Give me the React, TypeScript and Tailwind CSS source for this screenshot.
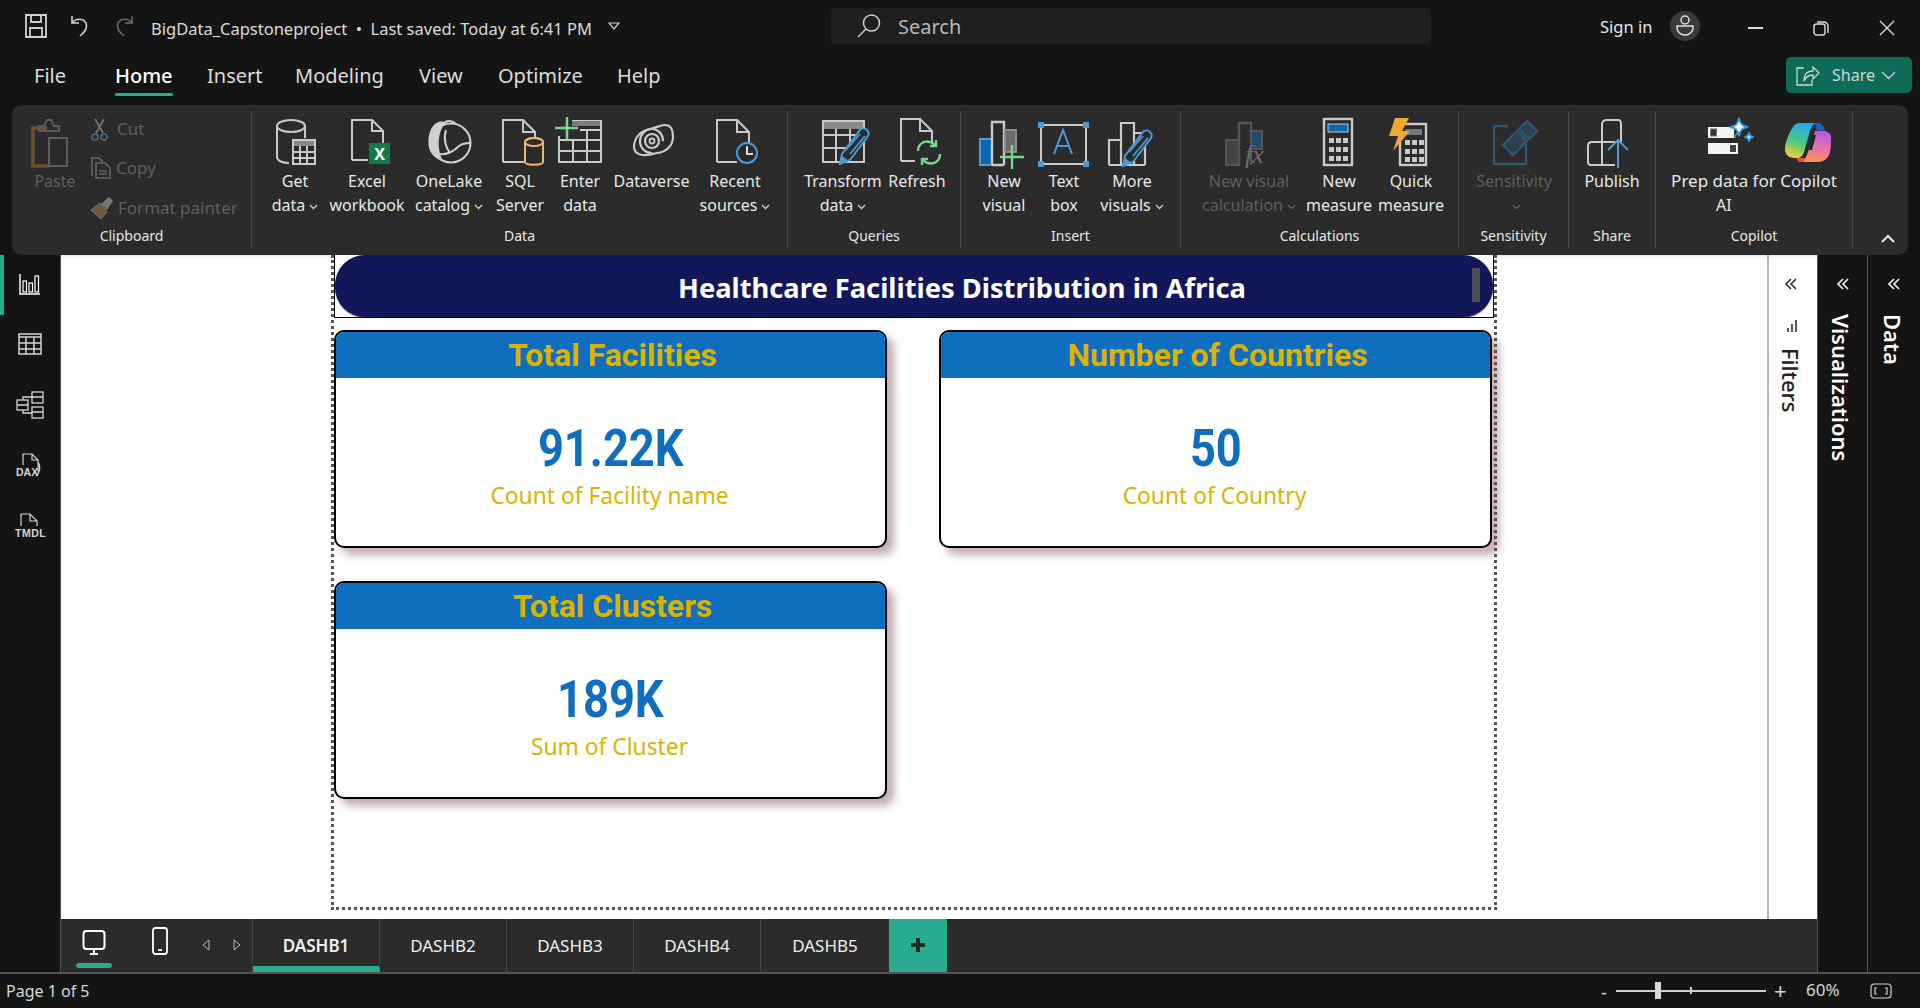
import React from "react";

const S = "#c9c9c9";
const B = "#4a9bd8";
const Svg = ({ w = 52, h = 52, vb, children, className = "" }: any) => (
  <svg width={w} height={h} viewBox={vb || `0 0 ${w} ${h}`} fill="none" className={`overflow-visible ${className}`}>{children}</svg>
);
const Caret = ({ c = "#d0d0d0" }: { c?: string }) => (
  <svg width="9" height="6" viewBox="0 0 9 6" fill="none" className="inline-block ml-[4px] align-middle"><path d="M1 1l3.5 3.5L8 1" stroke={c} strokeWidth="1.3" /></svg>
);

const IcGet = () => (<Svg><ellipse cx="22" cy="10" rx="14" ry="6" stroke={S} strokeWidth="2" /><path d="M8 10v31c0 4 6 6 12 6M36 10v12" stroke={S} strokeWidth="2" /><rect x="24" y="24" width="22" height="24" fill="#2b2b2b" stroke={S} strokeWidth="2" /><rect x="25" y="25" width="20" height="5" fill="#8a8a8a" /><path d="M25 36h20M25 42h20M31 30v18M38 30v18" stroke={S} strokeWidth="2" /></Svg>);
const IcExcel = () => (<Svg><path d="M11 44V4h20l11 11v18M31 4v11h11M11 44h16" stroke={S} strokeWidth="2" /><rect x="28" y="27" width="21" height="21" fill="#107c41" /><text x="38.500" y="44" textAnchor="middle" fontSize="16" fontWeight="700" fill="#fff" fontFamily="Noto Sans">X</text></Svg>);
const IcLake = () => (<Svg><circle cx="28" cy="27" r="19.500" stroke="#d0d0d0" strokeWidth="2" /><path d="M22 7c-3-3-9-1-12 3C4 18 4 32 9 38c3 4 7 6 11 7-5-9-7-26 2-38z" fill="#d0d0d0" /><path d="M20 8c4-5 10-3 13 0M23 14c-3 9 0 18 4 23M17 38c8 1 14-3 19-8 3-2 7-3 11-3" stroke="#d0d0d0" strokeWidth="2" /></Svg>);
const IcSql = () => (<Svg><path d="M9 46V4h20l12 12v6M29 4v12h12M9 46h21" stroke={S} strokeWidth="2" /><ellipse cx="40" cy="26" rx="9" ry="4" fill="#2b2b2b" stroke="#f1b56a" strokeWidth="2" /><path d="M31 26v20c0 3.500 18 3.500 18 0V26" fill="#2b2b2b" stroke="#f1b56a" strokeWidth="2" /><ellipse cx="40" cy="26" rx="9" ry="4" stroke="#f1b56a" strokeWidth="2" /></Svg>);
const IcEnter = () => (<Svg><path d="M5 20v26h42V5H18" stroke={S} strokeWidth="2" /><rect x="18" y="5" width="28" height="5" fill="#7a7a7a" /><path d="M5 24h42M5 35h42M19 24v22M33 14v32M26 14h21" stroke={S} strokeWidth="2" /><path d="M1 12h23M13 1v22" stroke="#74d98a" strokeWidth="2.500" /></Svg>);
const IcDv = () => (<Svg><path d="M8 31C8 22 14 15 24 13C30 12 34 9 39 9C45 9 47 15 47 21C47 30 40 36 31 37C26 38 22 40 16 39C11 38 8 35 8 31z" stroke={S} strokeWidth="2.200" /><path d="M37 25c0-7-5-12-11-12-7 0-12 6-12 12 0 7 5 12 12 12" stroke={S} strokeWidth="2.200" /><path d="M33 25c0-4-3-7-7-7s-7 3-7 7 3 7 7 7 7-3 7-7z" stroke={S} strokeWidth="2.200" /><circle cx="26" cy="25" r="2.500" stroke={S} strokeWidth="1.800" /></Svg>);
const IcRecent = () => (<Svg><path d="M8 46V4h20l12 12v15M28 4v12h12M8 46h20" stroke={S} strokeWidth="2" /><circle cx="38" cy="37" r="10" stroke={B} strokeWidth="2" fill="#2b2b2b" /><path d="M38 30v8h6" stroke="#ddd" strokeWidth="2" /></Svg>);
const Pencil = ({ x = 0, y = 0 }: { x?: number; y?: number }) => (
  <g transform={`translate(${x} ${y})`}><path d="M4 38l2-10L24 4c2-2 5-2 7 0s2 4 1 6L14 34z" fill="#2b2b2b" stroke={B} strokeWidth="2" /><path d="M10 24L24 8M14 28L29 10" stroke={B} strokeWidth="1.800" /><path d="M4 38l2-8 7 5z" fill={B} /></g>
);
const IcTrans = () => (<Svg><rect x="6" y="5" width="41" height="41" stroke={S} strokeWidth="2" /><rect x="7" y="6" width="39" height="7" fill="#8a8a8a" /><path d="M6 19h41M6 32h28M19 13v33M33 13v20" stroke={S} strokeWidth="2" /><Pencil x={19} y={10} /></Svg>);
const IcRefresh = () => (<Svg><path d="M10 45V3h19l12 12v11M29 3v12h12M10 45h14" stroke={S} strokeWidth="2" /><path d="M27 35c0-7 6-11 12-9 2 0 4 2 5 3M49 38c0 7-6 11-12 9-2 0-4-2-5-3" stroke="#74d98a" strokeWidth="2.400" /><path d="M45 24v6h-6M31 49v-6h6" stroke="#74d98a" strokeWidth="2.400" /></Svg>);
const IcNewV = () => (<Svg><rect x="2" y="23" width="12" height="26" fill="#0f66b0" stroke={B} strokeWidth="2" /><path d="M14 49V6h12v43M14 49h12" stroke={S} strokeWidth="2.400" /><rect x="27" y="14" width="11" height="22" fill="#6b6b6b" stroke="#8d8d8d" strokeWidth="2" /><path d="M22 41h24M34 29v24" stroke="#74d98a" strokeWidth="2.400" /></Svg>);
const IcText = () => (<Svg><rect x="3" y="9" width="45" height="39" stroke={S} strokeWidth="2" /><rect x="0" y="6" width="6" height="6" fill={B} /><rect x="45" y="6" width="6" height="6" fill={B} /><rect x="0" y="45" width="6" height="6" fill={B} /><rect x="45" y="45" width="6" height="6" fill={B} /><path d="M16 38L25 14l9 24M19 30h12" stroke={B} strokeWidth="2" /></Svg>);
const IcMore = () => (<Svg><path d="M3 49V24h12M15 49V7h13v42M28 17h11v32M3 49h36" stroke={S} strokeWidth="2.200" /><Pencil x={13} y={12} /></Svg>);
const IcFx = () => (<Svg><rect x="3" y="24" width="13" height="25" fill="#444" stroke="#555" strokeWidth="2" /><path d="M16 49V7h12v42" stroke="#555" strokeWidth="2.400" /><rect x="28" y="15" width="11" height="18" fill="#1f4b6e" stroke="#555" strokeWidth="2" /><text x="22" y="47" fontSize="26" fontStyle="italic" fill="#6e6e6e" fontFamily="Liberation Serif">fx</text></Svg>);
const IcCalc = () => (<Svg><rect x="11" y="3" width="28" height="46" stroke={S} strokeWidth="2.400" /><rect x="15" y="8" width="20" height="8" fill="#0f66b0" stroke={S} strokeWidth="1" />{[22, 31, 40].map((y) => [16, 23, 30].map((x) => <rect key={`${x}${y}`} x={x} y={y} width="5" height="5" fill={S} />))}</Svg>);
const IcQuick = () => (<Svg><rect x="15" y="8" width="26" height="41" stroke={S} strokeWidth="2.400" /><rect x="20" y="13" width="17" height="6" fill="#777" />{[24, 33, 41].map((y) => [20, 27, 34].map((x) => <rect key={`${x}${y}`} x={x} y={y} width="5" height="5" fill={S} />))}<path d="M10 2h14l-7 13h8L8 35l5-15H4z" fill="#f0a732" /></Svg>);
const IcSens = () => (<Svg><path d="M6 10h14M6 10v38h32V28" stroke="#2f566f" strokeWidth="2.400" /><path d="M15 29L29 15l10 10-14 14z M31 13l8-8 10 10-8 8z" stroke="#2f566f" strokeWidth="2.400" fill="#2f566f" fillOpacity="0.5" /></Svg>);
const IcPub = () => (<Svg><path d="M5 49c-3 0-3-2-3-3V30c0-3 2-4 4-4h10V8c0-2 2-4 4-4h12c2 0 3 2 3 4v18M16 26h18M16 26v23M5 49h24" stroke={S} strokeWidth="2" /><path d="M32 52V24M22 34l10-10 10 10" stroke={B} strokeWidth="2" /></Svg>);
const Star = ({ cx, cy, r }: { cx: number; cy: number; r: number }) => (
  <path d={`M${cx} ${cy - r}C${cx + r * 0.15} ${cy - r * 0.3} ${cx + r * 0.3} ${cy - r * 0.15} ${cx + r} ${cy}C${cx + r * 0.3} ${cy + r * 0.15} ${cx + r * 0.15} ${cy + r * 0.3} ${cx} ${cy + r}C${cx - r * 0.15} ${cy + r * 0.3} ${cx - r * 0.3} ${cy + r * 0.15} ${cx - r} ${cy}C${cx - r * 0.3} ${cy - r * 0.15} ${cx - r * 0.15} ${cy - r * 0.3} ${cx} ${cy - r}z`} fill="#fff" stroke="#2e9be6" strokeWidth="1.800" />
);
const IcPrep = () => (<Svg w={46} h={46}><rect x="0" y="8" width="26" height="11" fill="#f3f3f3" /><rect x="2.500" y="10" width="6" height="7" fill="#333" stroke="#777" /><path d="M27 19c0-3 1-5 5-6" stroke="#888" strokeWidth="1.500" /><rect x="0" y="24" width="30" height="11" fill="#f3f3f3" /><rect x="22" y="26" width="6" height="7" fill="#444" /><Star cx={31} cy={8} r={9} /><Star cx={41} cy={18} r={4.500} /></Svg>);
const IcCopilot = () => (
  <svg width="46" height="40" viewBox="0 0 46 40" fill="none">
    <defs>
      <linearGradient id="cg1" x1="0.6" y1="0" x2="0.3" y2="1"><stop offset="0" stopColor="#25a8f0" /><stop offset="0.55" stopColor="#4cc77f" /><stop offset="1" stopColor="#f3cf35" /></linearGradient>
      <linearGradient id="cg2" x1="0.7" y1="0" x2="0.5" y2="1"><stop offset="0" stopColor="#a85be6" /><stop offset="0.5" stopColor="#e66fb0" /><stop offset="1" stopColor="#f8964e" /></linearGradient>
    </defs>
    <path d="M30 9C36 8 44 8 46 14C46 24 46 30 43 35C40 39 36 40 32 40H15C19 38 21 36 22 33L30 9z" fill="url(#cg2)" />
    <path d="M12 36h9l-3 4h-2c-3 0-4-2-4-4z" fill="#e8503a" />
    <path d="M14 1H31C27 3 26 6 25 9L19 30C17 36 14 36 10 36C4 36 0 33 0 27C0 20 5 9 8 5C10 2 12 1 14 1z" fill="url(#cg1)" />
    <path d="M28 1H32C37 1 39 4 40 8L32 8C31 5 30 2 28 1z" fill="#1a5fd0" />
    <path d="M28 13L24 28L27 28L31 13z" fill="#14223a" />
  </svg>
);
const Paste = () => (<Svg><path d="M18 12H4v38h16" stroke="#6b5232" strokeWidth="3.500" /><path d="M10 10h5l3-6h4l3 6h5v5H10z" stroke="#5c5c5c" strokeWidth="2" /><rect x="20" y="22" width="18" height="28" stroke="#5c5c5c" strokeWidth="2" /></Svg>);

type It = { w?: number; icon: React.ReactNode; l1: string; l2?: string; caret?: boolean; dim?: boolean };
const Item = ({ w, icon, l1, l2, caret, dim }: It) => (
  <div style={{ width: w }} className={`flex flex-col items-center shrink-0 ${dim ? "text-[#5f5f5f]" : "text-[#e8e8e8]"}`}>
    <div className="h-[54px] flex items-center justify-center">{icon}</div>
    <div className="h-[24px] leading-[24px] whitespace-nowrap">{l1}</div>
    <div className="h-[24px] leading-[24px] whitespace-nowrap">{l2}{caret && <Caret c={dim ? "#5f5f5f" : "#d0d0d0"} />}</div>
  </div>
);
const Group = ({ w, pl = 0, label, children }: { w: number; pl?: number; label: string; children: React.ReactNode }) => (
  <div style={{ width: w }} className="h-[137px] shrink-0 border-r border-[#454545] flex flex-col justify-between">
    <div style={{ paddingLeft: pl }} className="flex pt-[4px] h-[106px]">{children}</div>
    <div className="h-[24px] leading-[24px] text-center text-[14px] text-[#e6e6e6]">{label}</div>
  </div>
);

const Ribbon = () => (
  <div className="h-[150px] mx-[12px] w-[1896px] bg-[#2b2b2b] rounded-[10px] flex pt-[6px] text-[16px] relative">
    <Group w={240} label="Clipboard">
      <div className="w-[84px] flex flex-col items-center pl-[2px] text-[#5f5f5f]">
        <div className="h-[54px] flex items-center"><Paste /></div>
        <div className="h-[24px] leading-[24px]">Paste</div>
      </div>
      <div className="flex flex-col text-[#5f5f5f] -mt-[6px] -ml-[5px]">
        <div className="h-[39px] shrink-0 flex items-center gap-[8px]"><svg width="18" height="24" viewBox="0 0 18 24" fill="none"><path d="M4 2l8 14M13 2L5 16" stroke="#777" strokeWidth="1.600" /><circle cx="4" cy="20" r="3" stroke="#4a6f8c" strokeWidth="1.600" /><circle cx="13" cy="20" r="3" stroke="#4a6f8c" strokeWidth="1.600" /></svg><span className="text-[17px]">Cut</span></div>
        <div className="h-[40px] shrink-0 flex items-center gap-[4px] -ml-[1px]"><svg width="22" height="24" viewBox="0 0 22 24" fill="none"><path d="M2 20V2h7l4 4M6 22V7h9l5 5v10z" stroke="#666" strokeWidth="1.600" /><path d="M9 15h8M9 18h8" stroke="#666" strokeWidth="1.400" /></svg><span className="text-[17px]">Copy</span></div>
        <div className="h-[39px] shrink-0 flex items-center gap-[4px] -ml-[1px] whitespace-nowrap"><svg width="24" height="24" viewBox="0 0 24 24" fill="none"><path d="M1 14l9-7 7 9-6 7z" fill="#6b5a3a" stroke="#777" /><path d="M11 8l8-7 4 4-6 9z" fill="#777" /></svg><span className="text-[17px]">Format painter</span></div>
      </div>
    </Group>
    <Group w={536} pl={6} label="Data">
      <Item w={74} icon={<IcGet />} l1="Get" l2="data" caret />
      <Item w={70} icon={<IcExcel />} l1="Excel" l2="workbook" />
      <Item w={94} icon={<IcLake />} l1="OneLake" l2="catalog" caret />
      <Item w={48} icon={<IcSql />} l1="SQL" l2="Server" />
      <Item w={72} icon={<IcEnter />} l1="Enter" l2="data" />
      <Item w={71} icon={<IcDv />} l1="Dataverse" />
      <Item w={96} icon={<IcRecent />} l1="Recent" l2="sources" caret />
    </Group>
    <Group w={173} pl={7} label="Queries">
      <Item w={96} icon={<IcTrans />} l1="Transform" l2="data" caret />
      <Item w={52} icon={<IcRefresh />} l1="Refresh" />
    </Group>
    <Group w={220} pl={9} label="Insert">
      <Item w={68} icon={<IcNewV />} l1="New" l2="visual" />
      <Item w={52} icon={<IcText />} l1="Text" l2="box" />
      <Item w={84} icon={<IcMore />} l1="More" l2="visuals" caret />
    </Group>
    <Group w={278} pl={9} label="Calculations">
      <Item w={118} icon={<IcFx />} l1="New visual" l2="calculation" caret dim />
      <Item w={62} icon={<IcCalc />} l1="New" l2="measure" />
      <Item w={82} icon={<IcQuick />} l1="Quick" l2="measure" />
    </Group>
    <Group w={110} label="Sensitivity">
      <Item w={110} icon={<IcSens />} l1="Sensitivity" caret dim />
    </Group>
    <Group w={87} label="Share">
      <Item w={86} icon={<IcPub />} l1="Publish" />
    </Group>
    <Group w={197} label="Copilot">
      <div className="w-full flex flex-col">
        <div className="h-[54px] flex items-center pl-[52px] gap-[31px]"><IcPrep /><IcCopilot /></div>
        <div className="h-[24px] leading-[24px] text-center text-[17px] text-[#e8e8e8] whitespace-nowrap">Prep data for Copilot</div>
        <div className="h-[24px] leading-[24px] text-[#e8e8e8] pl-[60px]">AI</div>
      </div>
    </Group>
    <svg width="16" height="10" viewBox="0 0 16 10" fill="none" className="absolute right-[12px] bottom-[11px]"><path d="M2 8l6-6 6 6" stroke="#e0e0e0" strokeWidth="2.200" /></svg>
  </div>
);

const TitleBar = () => (
  <div className="h-[52px] flex items-center relative text-[#dcdcdc]">
    <div className="w-[151px] flex items-center pl-[25px] gap-[22px] shrink-0">
      <svg width="22" height="24" viewBox="0 0 22 24" fill="none"><path d="M1 1h20v22H1zM6 1v7h10V1M5 23v-9h12v9" stroke="#d0d0d0" strokeWidth="1.800" /></svg>
      <svg width="22" height="24" viewBox="0 0 22 24" fill="none"><path d="M3 2v7h7M3 9c4-5 11-5 14 0 2 5-1 9-6 13" stroke="#d0d0d0" strokeWidth="1.600" /></svg>
      <svg width="22" height="24" viewBox="0 0 22 24" fill="none"><path d="M19 2v7h-7M19 9c-4-5-11-5-14 0-2 5 1 9 6 13" stroke="#6a6a6a" strokeWidth="1.600" /></svg>
    </div>
    <div className="text-[16.500px] whitespace-pre pt-[7px]">BigData_Capstoneproject  •  Last saved: Today at 6:41 PM</div>
    <svg width="12" height="8" viewBox="0 0 12 8" fill="none" className="absolute left-[608px] top-[22px]"><path d="M1 1h10L6 7z" stroke="#cfcfcf" strokeWidth="1.200" /></svg>
    <div className="absolute left-[831px] top-[8px] w-[600px] h-[36px] bg-[#1f1f1f] rounded-[4px] flex items-center pl-[25px] gap-[16px] text-[20px] text-[#b8b8b8]">
      <svg width="26" height="26" viewBox="0 0 26 26" fill="none"><circle cx="15.500" cy="10" r="8" stroke="#cfcfcf" strokeWidth="1.500" /><path d="M10 16L2 24" stroke="#cfcfcf" strokeWidth="1.500" /></svg>
      <span className="pt-[1px]">Search</span>
    </div>
    <div className="absolute left-[1600px] top-[12px] text-[16.500px] leading-[30px] text-[#e6e6e6]">Sign in</div>
    <div className="absolute left-[1670px] top-[11px] w-[30px] h-[30px] rounded-full bg-[#3a3a3a] flex items-center justify-center">
      <svg width="20" height="24" viewBox="0 0 20 24" fill="none"><circle cx="10" cy="6" r="4" stroke="#e0e0e0" strokeWidth="1.500" /><path d="M2 12h16v2c0 4-4 7-8 7s-8-3-8-7z" stroke="#e0e0e0" strokeWidth="1.500" /></svg>
    </div>
    <div className="absolute left-[1748px] top-[27px] w-[15px] h-[1.500px] bg-[#dcdcdc]" />
    <svg width="16" height="16" viewBox="0 0 16 16" fill="none" className="absolute left-[1813px] top-[20px]"><rect x="1" y="4" width="11" height="11" rx="2.500" stroke="#dcdcdc" strokeWidth="1.400" /><path d="M4 2h7c2 0 4 2 4 4v7" stroke="#dcdcdc" strokeWidth="1.400" /></svg>
    <svg width="16" height="16" viewBox="0 0 16 16" fill="none" className="absolute left-[1879px] top-[20px]"><path d="M1 1l14 14M15 1L1 15" stroke="#dcdcdc" strokeWidth="1.400" /></svg>
  </div>
);

const MenuBar = () => (
  <div className="h-[53px] relative">
    <div className="h-[48px] flex items-center text-[20px] text-[#dcdcdc] pl-[34px]">
      <span className="w-[81px]">File</span>
      <span className="w-[92px] text-white font-medium">Home</span>
      <span className="w-[88px]">Insert</span>
      <span className="w-[124px]">Modeling</span>
      <span className="w-[79px]">View</span>
      <span className="w-[119px]">Optimize</span>
      <span>Help</span>
    </div>
    <div className="absolute left-[115px] top-[41px] w-[58px] h-[3px] bg-[#2aab8f] rounded" />
    <div className="absolute left-[1786px] top-[5px] w-[126px] h-[36px] bg-[#0e6a59] rounded-[5px] flex items-center pl-[10px] gap-[12px] text-[16px] text-[#c8d8d4]">
      <svg width="24" height="22" viewBox="0 0 24 22" fill="none"><path d="M8 4H1v17h15v-5M8 17c0-8 4-10 9-10V3l6 6-6 6v-4c-4 0-7 1-9 6z" stroke="#c8d8d4" strokeWidth="1.300" /></svg>
      <span className="flex items-center gap-[6px]">Share<svg width="15" height="9" viewBox="0 0 15 9" fill="none"><path d="M1 1l6.500 6.500L14 1" stroke="#c8d8d4" strokeWidth="1.300" /></svg></span>
    </div>
  </div>
);

const Rail = () => {
  const c = "#d4d4d4";
  return (
    <div className="w-[61px] shrink-0 border-r border-[#555] bg-[#141414] flex flex-col relative">
      <div className="absolute left-0 top-0 w-[4px] h-[60px] bg-[#2aab8f]" />
      <div className="h-[60px] flex items-center justify-center"><svg width="22" height="22" viewBox="0 0 22 22" fill="none"><path d="M1 0v20h20" stroke="#fff" strokeWidth="1.400" /><rect x="4" y="7" width="3.500" height="11" stroke="#fff" strokeWidth="1.200" /><rect x="10" y="9" width="3.500" height="9" stroke="#fff" strokeWidth="1.200" /><rect x="16" y="2" width="3.500" height="16" stroke="#fff" strokeWidth="1.200" /></svg></div>
      <div className="h-[60px] flex items-center justify-center pb-[2px]"><svg width="24" height="22" viewBox="0 0 24 22" fill="none"><rect x="1" y="1" width="22" height="20" stroke={c} strokeWidth="1.500" /><path d="M1 4h22M1 10h22M1 16h22M8 4v17M16 4v17" stroke={c} strokeWidth="1.500" /></svg></div>
      <div className="h-[60px] flex items-center justify-center"><svg width="28" height="28" viewBox="0 0 28 28" fill="none"><rect x="1" y="9" width="11" height="10" stroke={c} strokeWidth="1.300" /><rect x="16" y="1" width="11" height="11" stroke={c} strokeWidth="1.300" /><rect x="16" y="16" width="11" height="11" stroke={c} strokeWidth="1.300" /><path d="M1 14h11M16 6h11M16 21h11M7 9V6h9M7 19v3h9" stroke={c} strokeWidth="1.300" /></svg></div>
      <div className="h-[60px] flex items-center justify-center"><svg width="28" height="26" viewBox="0 0 28 26" fill="none" className="overflow-visible"><path d="M7 13V2h9l6 6v10c1 2 0 5-2 6M22 10c3 4 2 11-2 14M16 2v6h6" stroke={c} strokeWidth="1.200" /><text x="0" y="23.500" fontSize="10.500" fontWeight="700" fill={c} fontFamily="Liberation Sans">DAX</text></svg></div>
      <div className="h-[60px] flex items-center justify-center"><svg width="30" height="26" viewBox="0 0 30 26" fill="none" className="overflow-visible"><path d="M6 14V2h9l7 7v5M15 2v7h7" stroke={c} strokeWidth="1.200" /><text x="0" y="25" fontSize="10.500" fontWeight="700" fill={c} fontFamily="Liberation Sans" letterSpacing="0.500">TMDL</text></svg></div>
    </div>
  );
};

const Card = ({ title, value, label }: { title: string; value: string; label: string }) => (
  <div className="h-[218px] border-2 border-black rounded-[10px] bg-white shadow-[7px_7px_9px_rgba(120,70,80,0.45)] flex flex-col">
    <div className="h-[46px] bg-[#106ebe] rounded-t-[8px] flex items-center justify-center text-[32px] font-bold text-[#dcb200] pl-[4px] font-['Roboto',sans-serif] whitespace-nowrap">{title}</div>
    <div className="flex flex-col items-center pt-[41px]">
      <div className="h-[60px] leading-[60px] text-[52px] font-bold text-[#106ebe] font-['Roboto',sans-serif]"><span className="inline-block scale-x-[0.87]">{value}</span></div>
      <div className="mt-[2px] text-[#dcb200] text-[22.800px] leading-[30px] -ml-[2px]">{label}</div>
    </div>
  </div>
);

const Page = () => (
  <div className="w-[1166px] h-[655px] ml-[270px] border-x-[3px] border-b-[3px] border-dotted border-[#555] shrink-0 flex flex-col">
    <div className="h-[63px] border-x border-b border-black bg-white">
      <div className="h-full bg-[#12175a] rounded-[30px] flex items-center justify-center relative text-white text-[27.300px] font-bold shadow-[0_1px_1px_rgba(0,0,0,0.5)] pl-[96px] pt-[4px]">
        Healthcare Facilities Distribution in Africa
        <div className="absolute right-[13px] top-[13px] w-[8px] h-[34px] bg-[#4d4d55]" />
      </div>
    </div>
    <div className="grid grid-cols-[553px_553px] gap-x-[52px] gap-y-[33px] pt-[12px]">
      <Card title="Total Facilities" value="91.22K" label="Count of Facility name" />
      <Card title="Number of Countries" value="50" label="Count of Country" />
      <Card title="Total Clusters" value="189K" label="Sum of Cluster" />
    </div>
  </div>
);

const Filters = () => (
  <div className="w-[50px] shrink-0 border-l-2 border-[#b5b5b5] flex flex-col items-center pt-[22px] text-[#222] pr-[4px]">
    <svg width="14" height="14" viewBox="0 0 14 14" fill="none" className="mb-[29px]"><path d="M7 2L2 7l5 5M12 2L7 7l5 5" stroke="#333" strokeWidth="1.700" /></svg>
    <svg width="13" height="12" viewBox="0 0 13 12" fill="none" className="mb-[16px]"><path d="M11 0v12M7 4v8M3 8v4" stroke="#444" strokeWidth="1.800" /></svg>
    <div className="[writing-mode:vertical-rl] text-[22px] leading-[24px] font-medium">Filters</div>
  </div>
);
const Pane = ({ t, cls }: { t: string; cls: string }) => (
  <div className={`shrink-0 flex flex-col items-center pt-[22px] text-white bg-[#141414] ${cls}`}>
    <svg width="14" height="14" viewBox="0 0 14 14" fill="none" className="mb-[23px]"><path d="M7 2L2 7l5 5M12 2L7 7l5 5" stroke="#eee" strokeWidth="1.700" /></svg>
    <div className="[writing-mode:vertical-rl] text-[22px] leading-[24px] font-semibold pr-[3px]">{t}</div>
  </div>
);

const Tabs = () => (
  <div className="h-[53px] bg-[#2b2b2b] flex text-[17px] text-[#f0f0f0] shrink-0">
    <div className="w-[192px] shrink-0 flex border-r border-[#444] relative">
      <svg width="24" height="26" viewBox="0 0 24 26" fill="none" className="absolute left-[21px] top-[11px]"><rect x="1.500" y="1" width="21" height="18" rx="3" stroke="#fff" strokeWidth="2" /><path d="M8 24h8M12 19v5" stroke="#fff" strokeWidth="2" /></svg>
      <div className="absolute left-[15px] top-[44px] w-[36px] h-[5px] bg-[#2aab8f] rounded-full" />
      <svg width="16" height="28" viewBox="0 0 16 28" fill="none" className="absolute left-[91px] top-[8px]"><rect x="1" y="1" width="14" height="26" rx="2.500" stroke="#fff" strokeWidth="1.800" /><path d="M6 23h4" stroke="#fff" strokeWidth="1.800" /></svg>
      <svg width="8" height="12" viewBox="0 0 8 12" fill="none" className="absolute left-[141px] top-[20px]"><path d="M7 1L1 6l6 5z" stroke="#bbb" /></svg>
      <svg width="8" height="12" viewBox="0 0 8 12" fill="none" className="absolute left-[172px] top-[20px]"><path d="M1 1l6 5-6 5z" stroke="#bbb" /></svg>
    </div>
    <div className="w-[127px] shrink-0 flex items-center justify-center font-semibold border-b-[6px] border-[#2aab8f] border-r border-r-[#444] pt-[6px]">DASHB1</div>
    {["DASHB2", "DASHB3", "DASHB4"].map((t) => (
      <div key={t} className="w-[127px] shrink-0 flex items-center justify-center border-r border-[#444]">{t}</div>
    ))}
    <div className="w-[128px] shrink-0 flex items-center justify-center">DASHB5</div>
    <div className="w-[58px] shrink-0 bg-[#2aab8f] flex items-center justify-center pb-[2px]"><svg width="18" height="18" viewBox="0 0 18 18"><path d="M9 2v14M2 9h14" stroke="#1a2a28" strokeWidth="4" /></svg></div>
  </div>
);

const StatusBar = () => (
  <div className="h-[36px] border-t-2 border-[#555] flex items-center relative text-[#d8d8d8] text-[16px] pl-[6px]">
    Page 1 of 5
    <div className="absolute left-[1601px] top-[6px] text-[18px] leading-[24px]">-</div>
    <div className="absolute left-[1616px] top-[16px] w-[150px] h-[1.500px] bg-[#cfcfcf]" />
    <div className="absolute left-[1655px] top-[8px] w-[6px] h-[17px] bg-[#d8d8d8]" />
    <div className="absolute left-[1690px] top-[13px] w-[2px] h-[7px] bg-[#cfcfcf]" />
    <div className="absolute left-[1774px] top-[4px] text-[22px] leading-[24px]">+</div>
    <div className="absolute left-[1806px] top-[4px] text-[17px] leading-[24px]">60%</div>
    <svg width="22" height="16" viewBox="0 0 22 16" fill="none" className="absolute left-[1870px] top-[9px]"><rect x="1" y="1" width="20" height="14" rx="3" stroke="#d0d0d0" strokeWidth="1.200" /><path d="M7 5H5v6h2M15 5h2v6h-2" stroke="#d0d0d0" strokeWidth="1.200" /></svg>
  </div>
);

export default function App() {
  return (
    <div className="w-[1920px] h-[1008px] overflow-hidden bg-[#141414] flex flex-col font-['Noto_Sans','Open_Sans',sans-serif]">
      <TitleBar />
      <MenuBar />
      <Ribbon />
      <div className="h-[717px] flex">
        <Rail />
        <div className="w-[1756px] shrink-0 flex flex-col">
          <div className="h-[664px] bg-white flex shadow-[inset_0_4px_4px_-3px_rgba(0,0,0,0.15)]">
            <div className="flex-1"><Page /></div>
            <Filters />
          </div>
          <Tabs />
        </div>
        <Pane t="Visualizations" cls="w-[51px] border-l border-r border-[#555]" />
        <Pane t="Data" cls="w-[52px]" />
      </div>
      <StatusBar />
    </div>
  );
}
